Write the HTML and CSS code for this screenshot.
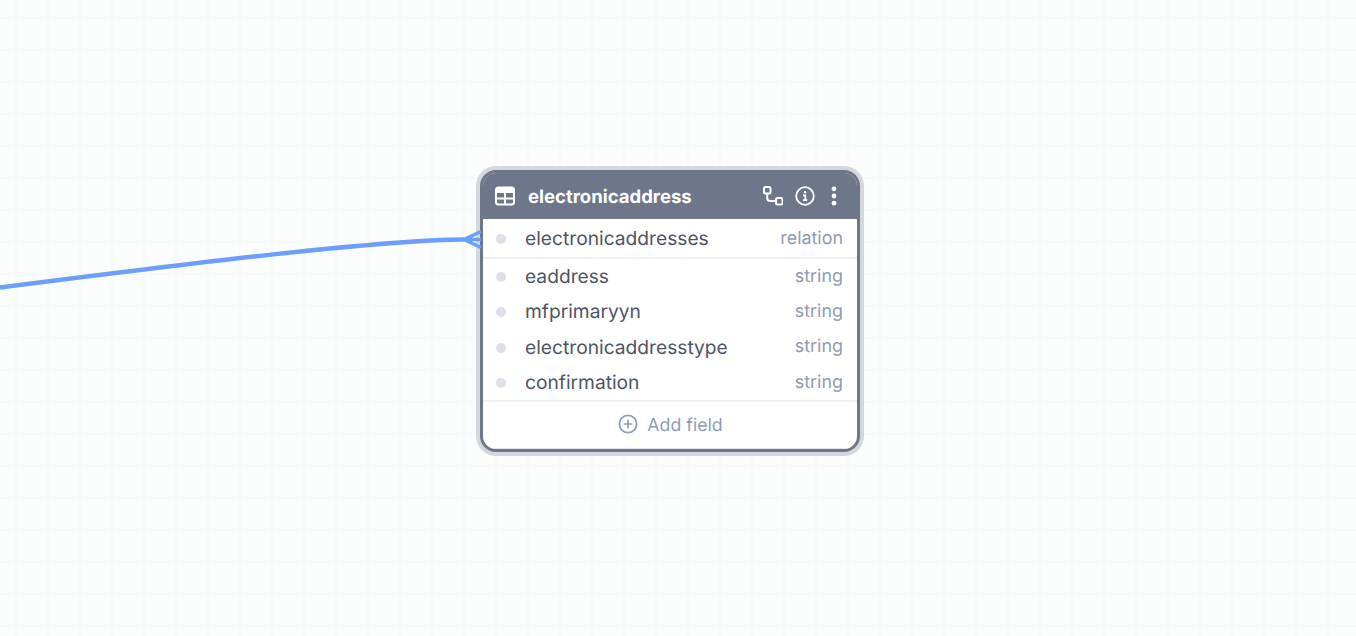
FILE: index.html
```html
<!DOCTYPE html>
<html lang="en">
<head>
<meta charset="utf-8">
<title>electronicaddress</title>
<link rel="stylesheet" href="styles.css">
</head>
<body>
<main class="canvas">
  <section class="node">
    <header class="node-head">
      <svg class="ico-table" width="20" height="20" viewBox="0 0 20 20" fill="none">
        <rect x="1" y="1.500" width="18" height="17" rx="2.500" stroke="#fff" stroke-width="2"/>
        <path d="M1 3.500a2 2 0 0 1 2-2h14a2 2 0 0 1 2 2V7H1z" fill="#fff"/>
        <path d="M1 12.500H19M10 7V18" stroke="#fff" stroke-width="2"/>
      </svg>
      <h1 class="node-title">electronicaddress</h1>
      <div class="head-actions">
        <svg width="20" height="20" viewBox="0 0 20 20" fill="none" stroke="#fff" stroke-width="2">
          <rect x="1" y="1" width="6.500" height="6.500" rx="1.500"/>
          <rect x="13" y="12" width="6.500" height="6.500" rx="1.500"/>
          <path d="M4.200 7.500V12a3 3 0 0 0 3 3H13"/>
        </svg>
        <svg width="20" height="20" viewBox="0 0 20 20" fill="none">
          <circle cx="10" cy="10" r="8.800" stroke="#fff" stroke-width="1.800"/>
          <circle cx="10" cy="6.200" r="1.200" fill="#fff"/>
          <path d="M8 9.300H10.300V14M8 14.200H12.300" stroke="#fff" stroke-width="1.700"/>
        </svg>
        <svg class="ico-more" width="6" height="20" viewBox="0 0 6 20" fill="#fff">
          <circle cx="3" cy="2.800" r="2.400"/>
          <circle cx="3" cy="10" r="2.400"/>
          <circle cx="3" cy="17.200" r="2.400"/>
        </svg>
      </div>
    </header>
    <div class="field field-relation">
      <span class="dot"></span><span class="field-name">electronicaddresses</span><span class="field-type">relation</span>
    </div>
    <div class="fields">
      <div class="field"><span class="dot"></span><span class="field-name">eaddress</span><span class="field-type">string</span></div>
      <div class="field"><span class="dot"></span><span class="field-name">mfprimaryyn</span><span class="field-type">string</span></div>
      <div class="field"><span class="dot"></span><span class="field-name">electronicaddresstype</span><span class="field-type">string</span></div>
      <div class="field"><span class="dot"></span><span class="field-name">confirmation</span><span class="field-type">string</span></div>
    </div>
    <footer class="add-field">
      <svg class="ico-add" width="20" height="20" viewBox="0 0 20 20" fill="none" stroke="#8f9bb3" stroke-width="1.700">
        <circle cx="10" cy="10" r="8.600"/>
        <path d="M10 5.800V14.200M5.800 10H14.200"/>
      </svg>
      <span>Add field</span>
    </footer>
  </section>
  <svg class="edge" width="490" height="636" viewBox="0 0 490 636" fill="none">
    <path class="edge-line" d="M0 287.500C200 262 380 240 464 239.500"/>
    <path class="edge-line edge-foot" d="M481 231.500L464 239.500L481 247.500M464 239.500H481"/>
  </svg>
</main>
</body>
</html>
```
FILE: styles.css
```css
* { box-sizing: border-box; }
html, body { margin: 0; height: 100%; overflow: hidden; }
.canvas {
  position: relative;
  width: 1356px;
  height: 636px;
  background-color: #fbfdfd;
  background-image:
    linear-gradient(to right, #f7f9fa 2px, transparent 2px),
    linear-gradient(to bottom, #f7f9fa 2px, transparent 2px);
  background-size: 32px 32px;
  background-position: 15px 17px;
  font-family: Inter, "Liberation Sans", sans-serif;
  text-rendering: geometricPrecision;
}
.edge { position: absolute; left: 0; top: 0; }
.edge-line { stroke: #6c9efb; stroke-width: 4.500; }
.edge-foot { stroke-width: 3.500; }
.node {
  position: absolute;
  left: 480px;
  top: 170px;
  width: 380px;
  height: 282px;
  display: flex;
  flex-direction: column;
  background: #fff;
  border: 3px solid #6e768a;
  border-radius: 16px;
  box-shadow: 0 0 0 4px #d4d7dc;
  overflow: hidden;
}
.node-head {
  height: 46px;
  flex: none;
  display: flex;
  align-items: center;
  margin: 0;
  padding: 0 20px 0 12px;
  background: #6e768a;
  color: #fff;
}
.node-title {
  margin: 0 0 0 13px;
  font-size: 18.500px;
  font-weight: 700;
  line-height: 1;
  position: relative;
  top: 1px;
}
.head-actions {
  margin-left: auto;
  display: flex;
  align-items: center;
  gap: 12px;
}
.ico-more { margin-left: 4px; }
.field {
  height: 35.300px;
  display: flex;
  align-items: center;
  padding: 0 14px 1px 13px;
  font-size: 19.200px;
}
.field-relation {
  height: 40px;
  flex: none;
  border-bottom: 2px solid #eef0f5;
  padding-bottom: 0;
}
.fields {
  display: flex;
  flex-direction: column;
  flex: none;
}
.dot {
  width: 10px;
  height: 10px;
  border-radius: 50%;
  background: #dde0e8;
  flex: none;
  position: relative;
  top: 1px;
}
.field-name {
  margin-left: 19px;
  color: #4d5566;
}
.field-type {
  margin-left: auto;
  color: #8f9bb3;
  font-size: 17.900px;
}
.add-field {
  flex: 1;
  display: flex;
  align-items: center;
  justify-content: center;
  gap: 9px;
  padding-left: 1px;
  border-top: 2px solid #eef0f5;
  border-bottom: 1px solid #e1e3e8;
  color: #8f9bb3;
  font-size: 17.800px;
}
.ico-add { margin-bottom: 2px; }
```
